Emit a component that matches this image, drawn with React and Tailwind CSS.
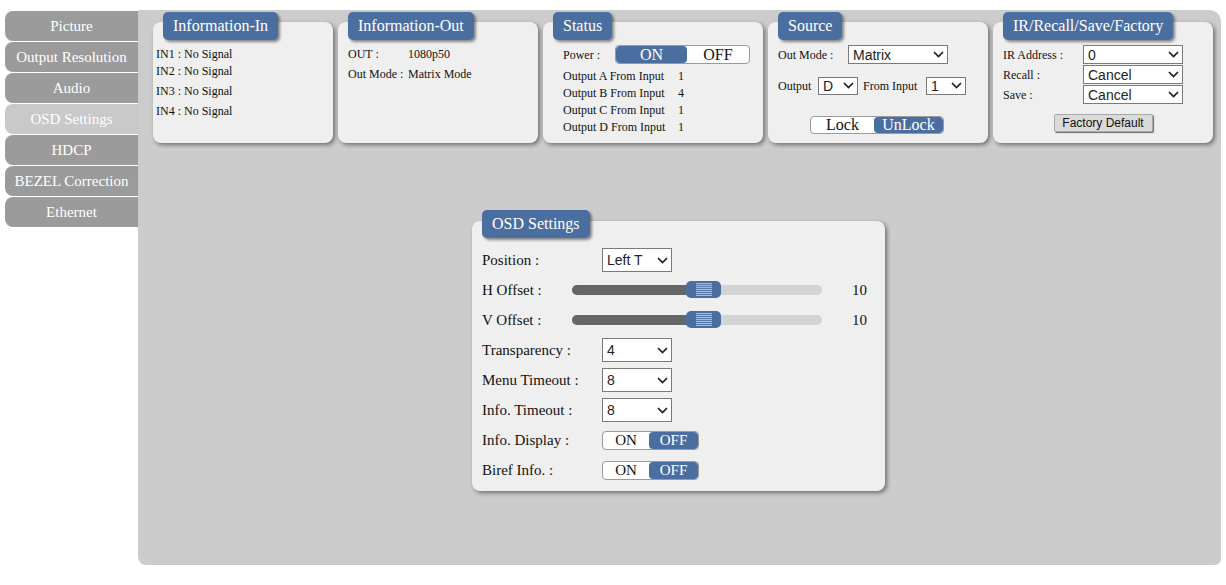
import React from 'react'

const BLUE = 'bg-[#4b6ea1]'

const MENU = ['Picture', 'Output Resolution', 'Audio', 'OSD Settings', 'HDCP', 'BEZEL Correction', 'Ethernet']

function Chevron() {
  return (
    <svg width="11" height="7" viewBox="0 0 11 7" className="shrink-0">
      <path d="M1 1l4.5 4.5L10 1" fill="none" stroke="#1f1f1f" strokeWidth="1.7" />
    </svg>
  )
}

function Select({ value, className = '' }) {
  return (
    <div
      className={`flex items-center justify-between bg-white border border-[#7a7a7a] pl-[4px] pr-[3px] font-['Liberation_Sans',Arial,sans-serif] text-[14px] leading-none text-[#222] ${className}`}
    >
      <span>{value}</span>
      <Chevron />
    </div>
  )
}

function Tab({ children, className = '' }) {
  return (
    <div
      className={`absolute left-[10px] h-[28px] px-[10px] flex items-center rounded-[5px] ${BLUE} text-white text-[16px] leading-none whitespace-nowrap shadow-[2px_2px_3px_rgba(0,0,0,0.45)] ${className}`}
    >
      {children}
    </div>
  )
}

function Card({ title, className = '', children }) {
  return (
    <div className={`relative h-[121px] rounded-[8px] bg-[#efefef] shadow-[2px_2px_4px_rgba(0,0,0,0.45)] ${className}`}>
      <Tab className="top-[-10px]">{title}</Tab>
      {children}
    </div>
  )
}

function Toggle({ left, right, active, leftW, className = '', text = 'text-[16px]' }) {
  return (
    <div className={`flex rounded-[4px] border border-[#9a9a9a] bg-white overflow-hidden ${text} leading-none ${className}`}>
      <div
        className={`${leftW} flex items-center justify-center rounded-[4px] ${active === 'left' ? `${BLUE} text-white` : 'text-[#111]'}`}
      >
        {left}
      </div>
      <div
        className={`flex-1 flex items-center justify-center rounded-[4px] ${active === 'right' ? `${BLUE} text-white` : 'text-[#111]'}`}
      >
        {right}
      </div>
    </div>
  )
}

function Slider() {
  return (
    <div className="relative w-[250px] h-[10px] rounded-full bg-[#d3d3d3]">
      <div className="absolute left-0 top-0 h-full w-[120px] rounded-l-full bg-[#666666]" />
      <div className={`absolute left-[114px] top-[-4px] w-[35px] h-[17px] rounded-[5px] ${BLUE} flex justify-center`}>
        <div className="my-[2px] w-[16px] bg-[repeating-linear-gradient(to_bottom,#a5b8d4_0px,#a5b8d4_1px,#5a7aab_1px,#5a7aab_2px)]" />
      </div>
    </div>
  )
}

function OsdRow({ label, children, labelW = 'w-[120px]' }) {
  return (
    <div className="flex items-center h-[30px]">
      <div className={`${labelW} shrink-0 text-[15px] text-[#111]`}>{label}</div>
      {children}
    </div>
  )
}

export default function App() {
  return (
    <div className="w-[1226px] h-[585px] bg-white font-['Liberation_Serif','Times_New_Roman',serif] text-[#111]">
      <div className="flex pt-[10px] pl-[5px]">
        {/* menu de gauche */}
        <div className="w-[133px] pt-[1px]">
          {MENU.map(m => (
            <div
              key={m}
              className={`h-[30px] mb-[1px] rounded-l-[8px] flex items-center justify-center text-[15px] text-white whitespace-nowrap ${m === 'OSD Settings' ? 'bg-[#c9c9c9]' : 'bg-[#9b9b9b]'}`}
            >
              {m}
            </div>
          ))}
        </div>

        {/* zone principale */}
        <div className="w-[1083px] h-[555px] bg-[#cccccc] rounded-tr-[12px] rounded-br-[6px] rounded-bl-[8px] pl-[15px] pt-[12px]">
          <div className="flex gap-[5px]">
            <Card title="Information-In" className="w-[180px]">
              <div className="pt-[24px] pl-[3px] text-[12px] leading-[17px]">
                <div>IN1 : No Signal</div>
                <div>IN2 : No Signal</div>
                <div className="mt-[3px]">IN3 : No Signal</div>
                <div className="mt-[3px]">IN4 : No Signal</div>
              </div>
            </Card>

            <Card title="Information-Out" className="w-[200px]">
              <div className="pt-[24px] pl-[10px] text-[12px] leading-[17px]">
                <div className="flex">
                  <span className="w-[60px]">OUT :</span>
                  <span>1080p50</span>
                </div>
                <div className="flex mt-[3px]">
                  <span className="w-[60px]">Out Mode :</span>
                  <span>Matrix Mode</span>
                </div>
              </div>
            </Card>

            <Card title="Status" className="w-[220px]">
              <div className="pt-[23px] pl-[20px] text-[12px]">
                <div className="flex items-center h-[19px]">
                  <span className="w-[52px]">Power :</span>
                  <Toggle left="ON" right="OFF" active="left" leftW="w-[71px]" className="w-[135px] h-[19px]" />
                </div>
                <div className="mt-[4px] leading-[17px]">
                  {[['A', 1], ['B', 4], ['C', 1], ['D', 1]].map(([o, n]) => (
                    <div key={o} className="flex">
                      <span className="w-[115px]">Output {o} From Input</span>
                      <span>{n}</span>
                    </div>
                  ))}
                </div>
              </div>
            </Card>

            <Card title="Source" className="w-[220px]">
              <div className="pt-[23px] pl-[10px] text-[12px]">
                <div className="flex items-center h-[19px]">
                  <span className="w-[70px]">Out Mode :</span>
                  <Select value="Matrix" className="w-[100px] h-[19px]" />
                </div>
                <div className="flex items-center h-[19px] mt-[12px]">
                  <span className="w-[40px]">Output</span>
                  <Select value="D" className="w-[40px] h-[18px]" />
                  <span className="ml-[5px] w-[63px]">From Input</span>
                  <Select value="1" className="w-[40px] h-[18px]" />
                </div>
                <div className="mt-[21px] pl-[32px]">
                  <Toggle left="Lock" right="UnLock" active="right" leftW="w-[63px]" className="w-[134px] h-[18px]" />
                </div>
              </div>
            </Card>

            <Card title="IR/Recall/Save/Factory" className="w-[220px]">
              <div className="pt-[23px] pl-[10px] text-[12px]">
                {[['IR Address :', '0'], ['Recall :', 'Cancel'], ['Save :', 'Cancel']].map(([l, v]) => (
                  <div key={l} className="flex items-center h-[19px] mb-[1px]">
                    <span className="w-[80px]">{l}</span>
                    <Select value={v} className="w-[100px] h-[19px]" />
                  </div>
                ))}
                <div className="flex justify-center pr-[10px] mt-[10px]">
                  <div className="w-[99px] h-[18px] flex items-center justify-center bg-[#dadada] border border-[#a8a8a8] rounded-[2px] shadow-[1px_1px_1px_#6b6b6b] font-['Liberation_Sans',Arial,sans-serif] text-[12px] leading-none text-[#111]">
                    Factory Default
                  </div>
                </div>
              </div>
            </Card>
          </div>

          {/* OSD Settings */}
          <div className="flex justify-center pr-[17px] mt-[78px]">
            <div className="relative w-[413px] h-[270px] rounded-[8px] bg-[#efefef] shadow-[2px_2px_4px_rgba(0,0,0,0.45)] pt-[24px] pl-[10px]">
              <Tab className="top-[-11px]">OSD Settings</Tab>
              <OsdRow label="Position :">
                <Select value="Left T" className="w-[70px] h-[24px]" />
              </OsdRow>
              <OsdRow label="H Offset :" labelW="w-[90px]">
                <Slider />
                <span className="ml-[30px] text-[15px]">10</span>
              </OsdRow>
              <OsdRow label="V Offset :" labelW="w-[90px]">
                <Slider />
                <span className="ml-[30px] text-[15px]">10</span>
              </OsdRow>
              <OsdRow label="Transparency :">
                <Select value="4" className="w-[70px] h-[24px]" />
              </OsdRow>
              <OsdRow label="Menu Timeout :">
                <Select value="8" className="w-[70px] h-[24px]" />
              </OsdRow>
              <OsdRow label="Info. Timeout :">
                <Select value="8" className="w-[70px] h-[24px]" />
              </OsdRow>
              <OsdRow label="Info. Display :">
                <Toggle left="ON" right="OFF" active="right" leftW="w-[46px]" text="text-[15px]" className="w-[97px] h-[19px]" />
              </OsdRow>
              <OsdRow label="Biref Info. :">
                <Toggle left="ON" right="OFF" active="right" leftW="w-[46px]" text="text-[15px]" className="w-[97px] h-[19px]" />
              </OsdRow>
            </div>
          </div>
        </div>
      </div>
    </div>
  )
}
